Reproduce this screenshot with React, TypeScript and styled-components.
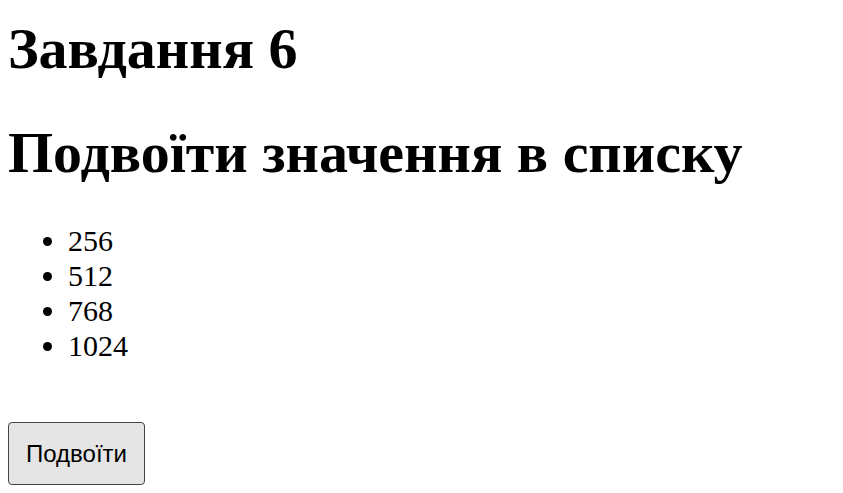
import React, { useState } from "react";
import styled, { createGlobalStyle } from "styled-components";

const GlobalStyle = createGlobalStyle`
  body {
    margin: 0;
    background: #fff;
    color: #000;
    font-family: "Liberation Serif", "Times New Roman", serif;
    font-size: 30px;
  }
`;

const Page = styled.main`
  padding: 17px 8px 8px;
`;

const Heading = styled.h1`
  margin: 0;
  font-size: 58px;
  line-height: 64px;
  font-weight: 700;

  & + & {
    margin-top: 40px;
  }
`;

const ValueList = styled.ul`
  margin: 38px 0 59px;
  padding-left: 60px;
  line-height: 35px;
`;

const DoubleButton = styled.button`
  padding: 17px;
  border: 1px solid #444;
  border-radius: 4px;
  background: #e5e5e5;
  color: #000;
  font-family: "Liberation Sans", Arial, sans-serif;
  font-size: 24px;
  line-height: 27px;
`;

export default function App() {
  const [values, setValues] = useState([256, 512, 768, 1024]);

  return (
    <>
      <GlobalStyle />
      <Page>
        <Heading>Завдання 6</Heading>
        <Heading>Подвоїти значення в списку</Heading>
        <ValueList>
          {values.map((value, index) => (
            <li key={index}>{value}</li>
          ))}
        </ValueList>
        <DoubleButton type="button" onClick={() => setValues(values.map((v) => v * 2))}>
          Подвоїти
        </DoubleButton>
      </Page>
    </>
  );
}
